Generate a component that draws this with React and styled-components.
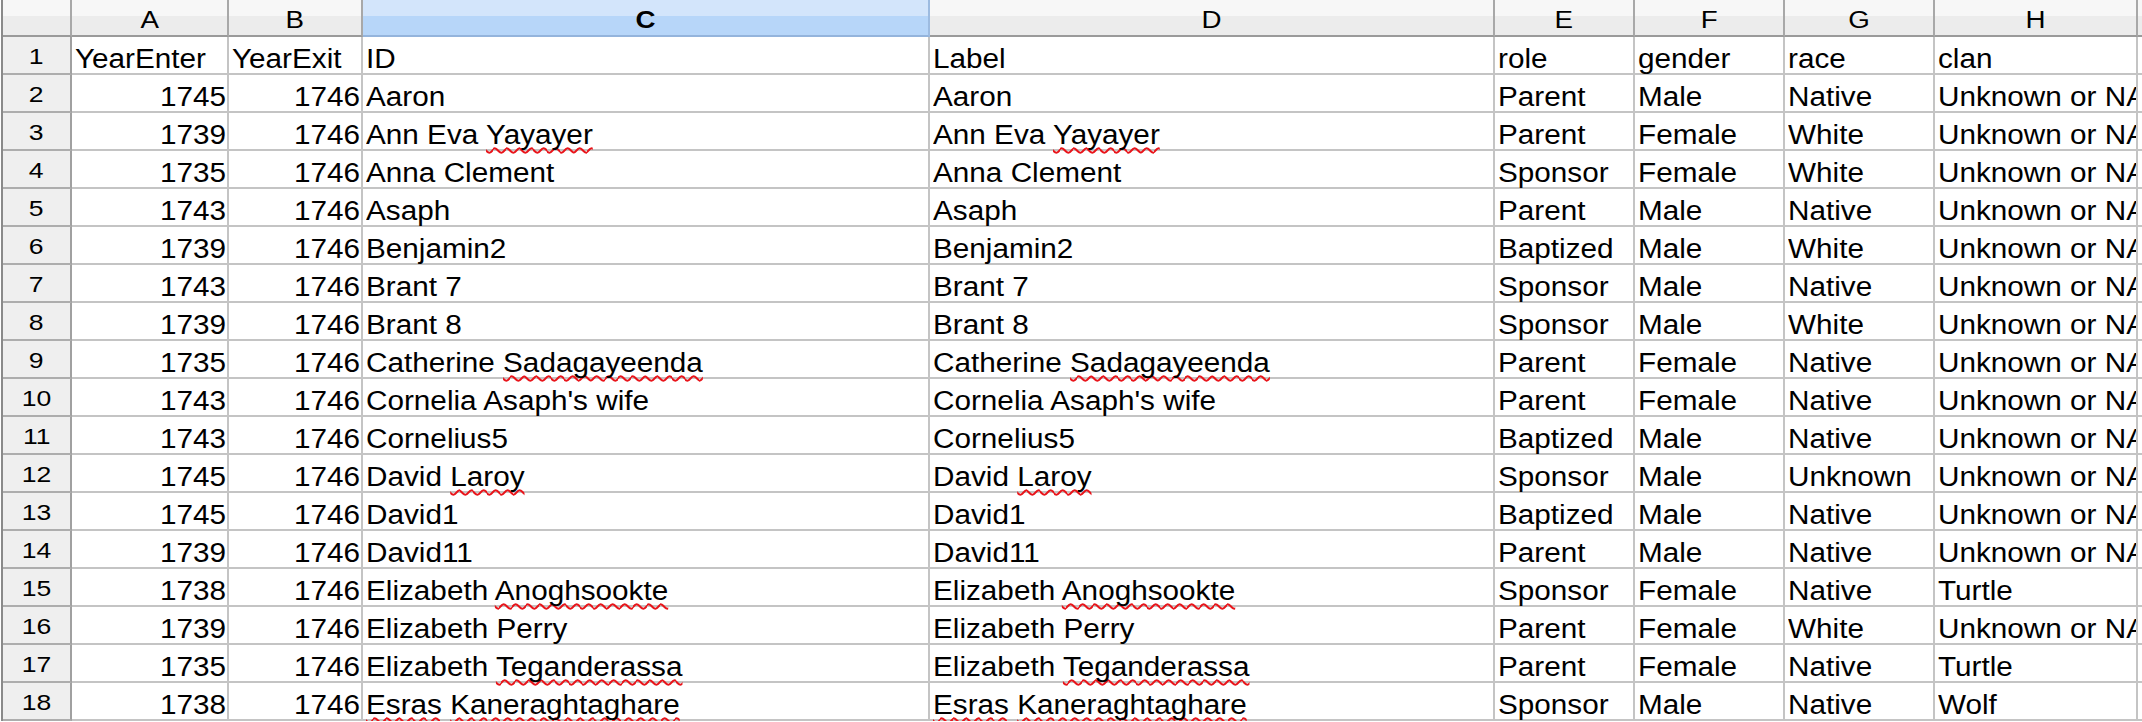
import React from 'react';
import styled, {createGlobalStyle} from 'styled-components';

const columns = ['A', 'B', 'C', 'D', 'E', 'F', 'G', 'H', ''];
const selectedCol = 'C';

const rows = [
    ['YearEnter', 'YearExit', 'ID', 'Label', 'role', 'gender', 'race', 'clan'],
    [1745, 1746, 'Aaron', 'Aaron', 'Parent', 'Male', 'Native', 'Unknown or NA'],
    [1739, 1746, 'Ann Eva Yayayer', 'Ann Eva Yayayer', 'Parent', 'Female', 'White', 'Unknown or NA'],
    [1735, 1746, 'Anna Clement', 'Anna Clement', 'Sponsor', 'Female', 'White', 'Unknown or NA'],
    [1743, 1746, 'Asaph', 'Asaph', 'Parent', 'Male', 'Native', 'Unknown or NA'],
    [1739, 1746, 'Benjamin2', 'Benjamin2', 'Baptized', 'Male', 'White', 'Unknown or NA'],
    [1743, 1746, 'Brant 7', 'Brant 7', 'Sponsor', 'Male', 'Native', 'Unknown or NA'],
    [1739, 1746, 'Brant 8', 'Brant 8', 'Sponsor', 'Male', 'White', 'Unknown or NA'],
    [1735, 1746, 'Catherine Sadagayeenda', 'Catherine Sadagayeenda', 'Parent', 'Female', 'Native', 'Unknown or NA'],
    [1743, 1746, "Cornelia Asaph's wife", "Cornelia Asaph's wife", 'Parent', 'Female', 'Native', 'Unknown or NA'],
    [1743, 1746, 'Cornelius5', 'Cornelius5', 'Baptized', 'Male', 'Native', 'Unknown or NA'],
    [1745, 1746, 'David Laroy', 'David Laroy', 'Sponsor', 'Male', 'Unknown', 'Unknown or NA'],
    [1745, 1746, 'David1', 'David1', 'Baptized', 'Male', 'Native', 'Unknown or NA'],
    [1739, 1746, 'David11', 'David11', 'Parent', 'Male', 'Native', 'Unknown or NA'],
    [1738, 1746, 'Elizabeth Anoghsookte', 'Elizabeth Anoghsookte', 'Sponsor', 'Female', 'Native', 'Turtle'],
    [1739, 1746, 'Elizabeth Perry', 'Elizabeth Perry', 'Parent', 'Female', 'White', 'Unknown or NA'],
    [1735, 1746, 'Elizabeth Teganderassa', 'Elizabeth Teganderassa', 'Parent', 'Female', 'Native', 'Turtle'],
    [1738, 1746, 'Esras Kaneraghtaghare', 'Esras Kaneraghtaghare', 'Sponsor', 'Male', 'Native', 'Wolf'],
];

// words the spellchecker flags with the red wave
const misspelled = ['Yayayer', 'Sadagayeenda', 'Laroy', 'Anoghsookte', 'Teganderassa', 'Esras', 'Kaneraghtaghare'];

function renderText(value) {
    if (typeof value !== 'string') return value;
    const words = value.split(' ');
    return words.map((w, i) => (
        <React.Fragment key={i}>
            {misspelled.includes(w) ? <Spell>{w}</Spell> : w}
            {i < words.length - 1 ? ' ' : ''}
        </React.Fragment>
    ));
}

export default function App() {
    return (
        <>
            <GlobalStyle />
            <Sheet>
                <Corner />
                {columns.map(col => (
                    <ColHead key={col || 'rest'} $selected={col === selectedCol}>
                        <HeadText>{col}</HeadText>
                    </ColHead>
                ))}
                {rows.map((row, r) => (
                    <React.Fragment key={r}>
                        <RowHead>
                            <HeadText>{r + 1}</HeadText>
                        </RowHead>
                        {row.map((value, c) => {
                            const num = typeof value === 'number';
                            return (
                                <Cell key={c} $num={num}>
                                    <CellText $num={num}>{renderText(value)}</CellText>
                                </Cell>
                            );
                        })}
                        <Cell />
                    </React.Fragment>
                ))}
            </Sheet>
        </>
    );
}

const GlobalStyle = createGlobalStyle`
    html, body {
        margin: 0;
        padding: 0;
        background: #ffffff;
    }
    body {
        font-family: "Liberation Sans", Arial, sans-serif;
        color: #000;
        overflow: hidden;
    }
    * {
        box-sizing: border-box;
    }
`

const Sheet = styled.div`
    display: grid;
    grid-template-columns: 69px 157px 134px 567px 565px 140px 150px 150px 203px 1fr;
    margin-left: 1px;
    border-left: 2px solid #8a8a8a;
`

const Corner = styled.div`
    height: 37px;
    border-right: 2px solid #a8a8a8;
    border-bottom: 2px solid #9a9a9a;
    background: linear-gradient(to bottom, #f7f7f7 0, #f7f7f7 45%, #ececec 45%, #ececec 100%);
`

const ColHead = styled.div`
    height: 37px;
    padding-top: 7px;
    text-align: center;
    font-size: 23.5px;
    line-height: 26px;
    font-weight: ${p => (p.$selected ? 'bold' : 'normal')};
    border-right: 2px solid ${p => (p.$selected ? '#9dbbe0' : '#a8a8a8')};
    border-bottom: 2px solid ${p => (p.$selected ? '#94b4dc' : '#9a9a9a')};
    background: ${p => (p.$selected
        ? 'linear-gradient(to bottom, #d3e5fb 0, #d3e5fb 45%, #b7d6f9 45%, #b7d6f9 100%)'
        : 'linear-gradient(to bottom, #f7f7f7 0, #f7f7f7 45%, #ececec 45%, #ececec 100%)')};
`

const RowHead = styled.div`
    height: 38px;
    padding-top: 8px;
    text-align: center;
    font-size: 22.5px;
    line-height: 24px;
    background: #efefef;
    border-right: 2px solid #a0a0a0;
    border-bottom: 2px solid #adadad;
`

const HeadText = styled.span`
    display: inline-block;
    transform: scaleX(1.18);
    transform-origin: center;
`

const Cell = styled.div`
    height: 38px;
    padding: 8px 1px 0 3px;
    overflow-x: clip;
    overflow-y: visible;
    white-space: nowrap;
    font-size: 27px;
    line-height: 28px;
    text-align: ${p => (p.$num ? 'right' : 'left')};
    background: #ffffff;
    border-right: 2px solid #c4c4c4;
    border-bottom: 2px solid #c4c4c4;
`

const CellText = styled.span`
    display: inline-block;
    transform: scaleX(1.1);
    transform-origin: ${p => (p.$num ? 'right' : 'left')} center;
`

const Spell = styled.span`
    text-decoration: underline wavy #e8141a;
    text-decoration-thickness: 1.5px;
    text-underline-offset: 3px;
    text-decoration-skip-ink: none;
`
